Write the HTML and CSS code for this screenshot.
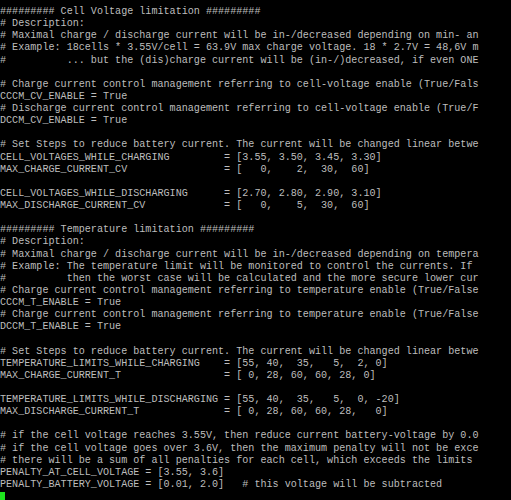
FILE: index.html
```html
<!DOCTYPE html>
<html lang="en">
<head>
<meta charset="utf-8">
<title>Terminal</title>
<link rel="stylesheet" href="styles.css">
</head>
<body>
<div class="screen">
<pre class="term">######### Cell Voltage limitation #########
# Description:
# Maximal charge / discharge current will be in-/decreased depending on min- an
# Example: 18cells * 3.55V/cell = 63.9V max charge voltage. 18 * 2.7V = 48,6V m
#          ... but the (dis)charge current will be (in-/)decreased, if even ONE

# Charge current control management referring to cell-voltage enable (True/Fals
CCCM_CV_ENABLE = True
# Discharge current control management referring to cell-voltage enable (True/F
DCCM_CV_ENABLE = True

# Set Steps to reduce battery current. The current will be changed linear betwe
CELL_VOLTAGES_WHILE_CHARGING         = [3.55, 3.50, 3.45, 3.30]
MAX_CHARGE_CURRENT_CV                = [   0,    2,  30,  60]

CELL_VOLTAGES_WHILE_DISCHARGING      = [2.70, 2.80, 2.90, 3.10]
MAX_DISCHARGE_CURRENT_CV             = [   0,    5,  30,  60]

######### Temperature limitation #########
# Description:
# Maximal charge / discharge current will be in-/decreased depending on tempera
# Example: The temperature limit will be monitored to control the currents. If
#          then the worst case will be calculated and the more secure lower cur
# Charge current control management referring to temperature enable (True/False
CCCM_T_ENABLE = True
# Charge current control management referring to temperature enable (True/False
DCCM_T_ENABLE = True

# Set Steps to reduce battery current. The current will be changed linear betwe
TEMPERATURE_LIMITS_WHILE_CHARGING    = [55, 40,  35,   5,  2, 0]
MAX_CHARGE_CURRENT_T                 = [ 0, 28, 60, 60, 28, 0]

TEMPERATURE_LIMITS_WHILE_DISCHARGING = [55, 40,  35,   5,  0, -20]
MAX_DISCHARGE_CURRENT_T              = [ 0, 28, 60, 60, 28,   0]

# if the cell voltage reaches 3.55V, then reduce current battery-voltage by 0.0
# if the cell voltage goes over 3.6V, then the maximum penalty will not be exce
# there will be a sum of all penalties for each cell, which exceeds the limits
PENALTY_AT_CELL_VOLTAGE = [3.55, 3.6]
PENALTY_BATTERY_VOLTAGE = [0.01, 2.0]   # this voltage will be subtracted
<span class="cursor"></span></pre>
</div>
</body>
</html>
```

FILE: styles.css
```css
html, body {
  margin: 0;
  padding: 0;
  background: #000;
}

.screen {
  width: 511px;
  height: 500px;
  overflow: hidden;
  background: #000;
}

.term {
  margin: 0;
  padding: 6px 0 0 0;
  font-family: "Liberation Mono", "DejaVu Sans Mono", monospace;
  font-size: 10.1px;
  line-height: 12.13px;
  color: #bdbdbd;
  white-space: pre;
}

.cursor {
  display: inline-block;
  width: 5px;
  height: 10px;
  background: #1ee61e;
  vertical-align: top;
  margin-top: 1px;
}
```
